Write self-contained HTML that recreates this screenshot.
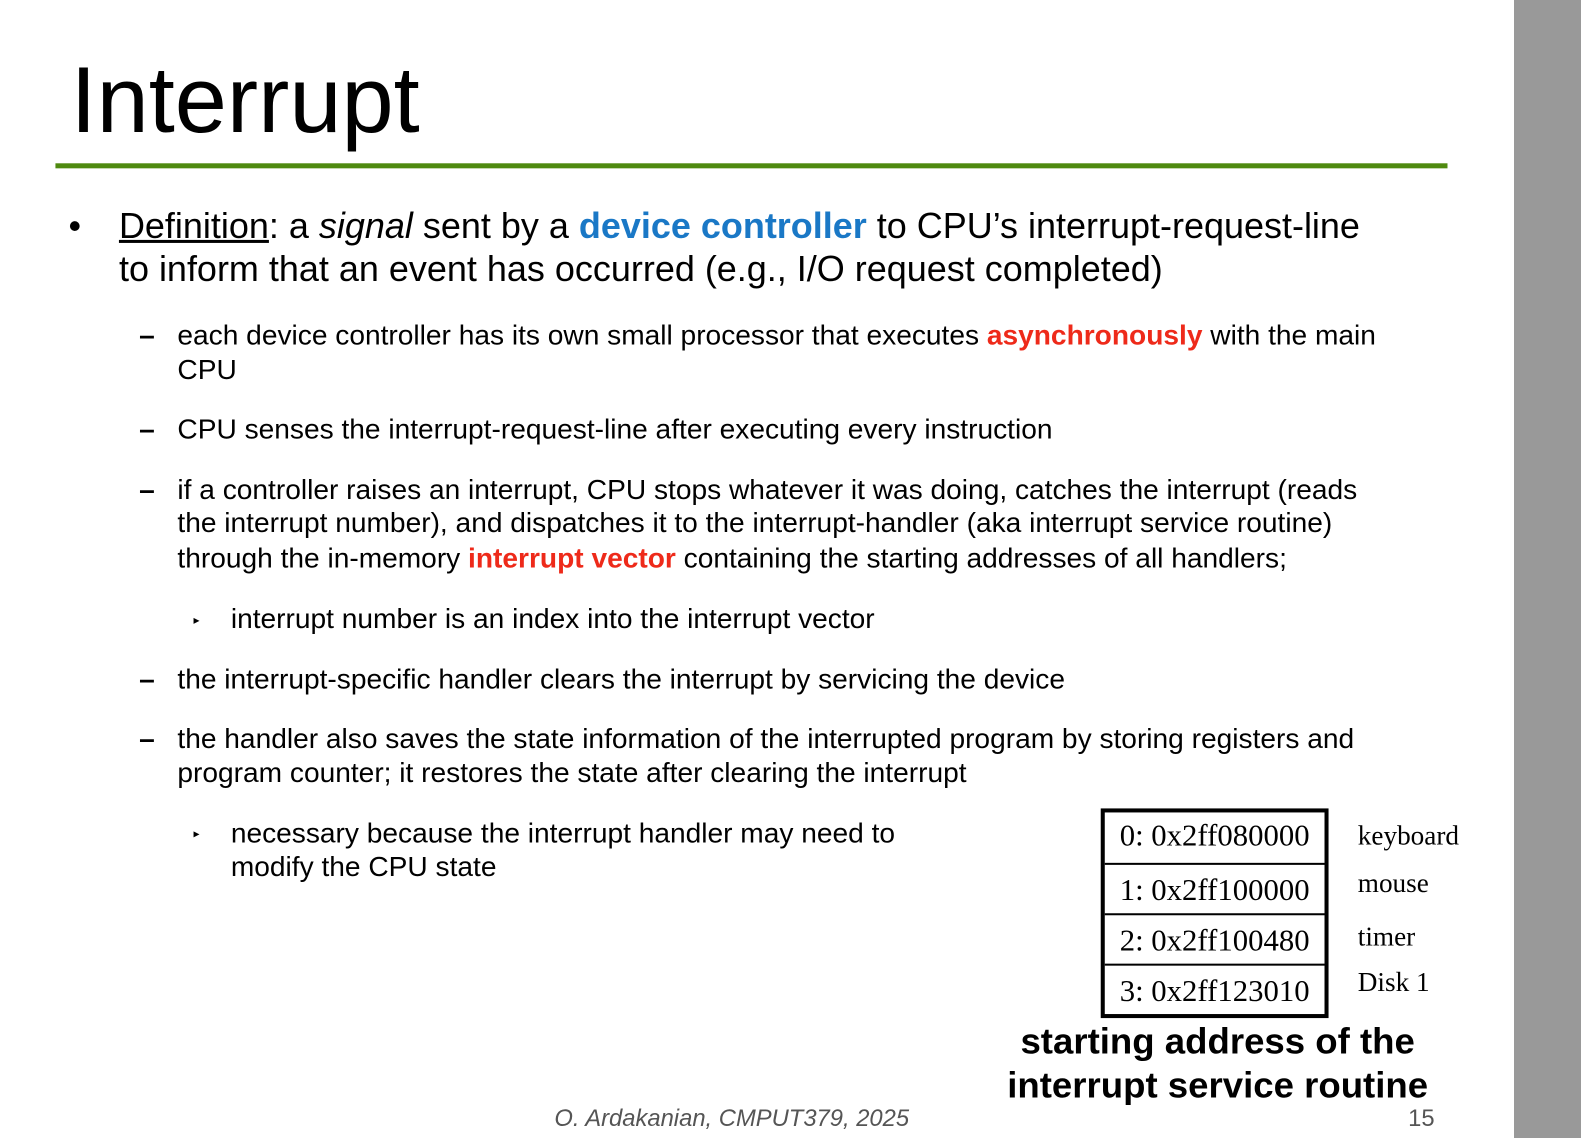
<!DOCTYPE html>
<html><head><meta charset="utf-8"><style>
html,body{margin:0;padding:0;}
body{width:1581px;height:1138px;position:relative;background:#fff;overflow:hidden;font-family:"Liberation Sans",Arial,sans-serif;color:#000;}
#w{position:absolute;left:0;top:0;width:1581px;height:1138px;transform:scale(1.008);transform-origin:0 0;}
.a{position:absolute;white-space:nowrap;}
.m{font-size:35.7px;line-height:40px;}
.s{font-size:27.9px;line-height:32px;}
.r{color:#ee2a1a;font-weight:bold;}
.b{color:#1a78c6;font-weight:bold;}
.d{font-weight:bold;}
.cell{position:absolute;left:0;width:218px;height:48px;font-family:"Liberation Serif",serif;font-size:30.5px;line-height:50px;text-align:center;border-top:2px solid #000;}
.lab{position:absolute;left:1347px;font-family:"Liberation Serif",serif;font-size:27px;line-height:30px;}
</style></head><body>
<div style="position:absolute;left:1514px;top:0;width:67px;height:1138px;background:#999;"></div>
<div id="w">
<div class="a" style="left:70px;top:49px;font-size:93px;line-height:100px;">Interrupt</div>
<div style="position:absolute;left:55px;top:162px;width:1381px;height:5px;background:#4f8a10;"></div>

<div class="a m" style="left:68px;top:204px;">•</div>
<div class="a m" style="left:118px;top:204px;"><u>Definition</u>: a <i>signal</i> sent by a <span class="b">device controller</span> to CPU’s interrupt-request-line</div>
<div class="a m" style="left:118px;top:247px;">to inform that an event has occurred (e.g., I/O request completed)</div>

<div class="a s d" style="left:138px;top:317px;">–</div>
<div class="a s" style="left:176px;top:317px;">each device controller has its own small processor that executes <span class="r">asynchronously</span> with the main</div>
<div class="a s" style="left:176px;top:351px;">CPU</div>

<div class="a s d" style="left:138px;top:410px;">–</div>
<div class="a s" style="left:176px;top:410px;">CPU senses the interrupt-request-line after executing every instruction</div>

<div class="a s d" style="left:138px;top:470px;">–</div>
<div class="a s" style="left:176px;top:470px;">if a controller raises an interrupt, CPU stops whatever it was doing, catches the interrupt (reads</div>
<div class="a s" style="left:176px;top:503px;">the interrupt number), and dispatches it to the interrupt-handler (aka interrupt service routine)</div>
<div class="a s" style="left:176px;top:538px;">through the in-memory <span class="r">interrupt vector</span> containing the starting addresses of all handlers;</div>

<div class="a" style="left:192px;top:608px;font-size:12px;">▸</div>
<div class="a s" style="left:229px;top:598px;">interrupt number is an index into the interrupt vector</div>

<div class="a s d" style="left:138px;top:658px;">–</div>
<div class="a s" style="left:176px;top:658px;">the interrupt-specific handler clears the interrupt by servicing the device</div>

<div class="a s d" style="left:138px;top:717px;">–</div>
<div class="a s" style="left:176px;top:717px;">the handler also saves the state information of the interrupted program by storing registers and</div>
<div class="a s" style="left:176px;top:751px;">program counter; it restores the state after clearing the interrupt</div>

<div class="a" style="left:192px;top:820px;font-size:12px;">▸</div>
<div class="a s" style="left:229px;top:811px;">necessary because the interrupt handler may need to</div>
<div class="a s" style="left:229px;top:844px;">modify the CPU state</div>

<div style="position:absolute;left:1092px;top:802px;width:218px;height:200px;border:4px solid #000;">
<div class="cell" style="top:-2px;border-top:none;height:50px;">0: 0x2ff080000</div>
<div class="cell" style="top:50px;">1: 0x2ff100000</div>
<div class="cell" style="top:100px;">2: 0x2ff100480</div>
<div class="cell" style="top:150px;">3: 0x2ff123010</div>
</div>
<div class="lab" style="top:814px;">keyboard</div>
<div class="lab" style="top:861px;">mouse</div>
<div class="lab" style="top:914px;">timer</div>
<div class="lab" style="top:959px;">Disk 1</div>

<div class="a" style="left:960px;width:496px;text-align:center;top:1011px;font-size:36.3px;line-height:44px;font-weight:bold;">starting address of the<br>interrupt service routine</div>

<div class="a" style="left:550px;top:1097px;font-size:23.6px;line-height:26px;font-style:italic;color:#555;">O. Ardakanian, CMPUT379, 2025</div>
<div class="a" style="left:1397px;top:1097px;font-size:23.6px;line-height:26px;color:#555;">15</div>
</div>
</body></html>
